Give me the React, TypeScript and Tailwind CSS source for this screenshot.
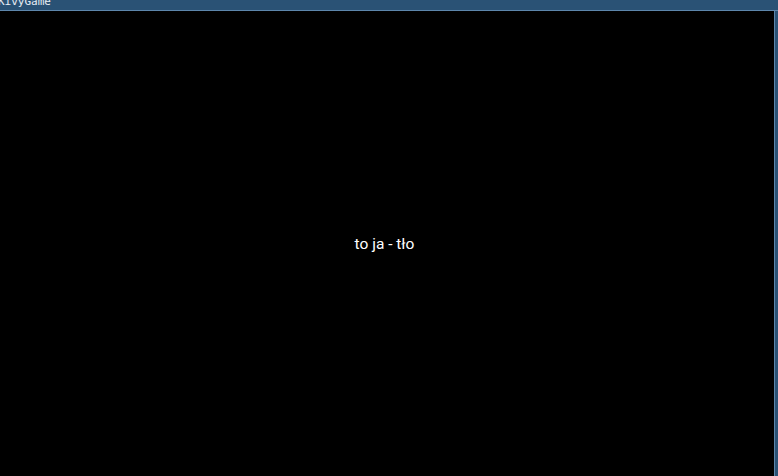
import React from "react";

export default function App() {
  return (
    <div className="w-[778px] h-[476px] bg-black flex flex-col overflow-hidden">
      <div className="h-[10px] bg-[#2a5275] relative overflow-hidden shrink-0">
        <span className="absolute left-[-2px] top-[-5px] text-[11px] leading-[14px] text-[#e8eef4] font-['DejaVu_Sans_Mono',monospace]">KivyGame</span>
      </div>
      <div className="h-px bg-[#5d86ab] shrink-0" />
      <div className="flex-1 flex">
        <div className="flex-1 flex items-center justify-center">
          <span className="text-white text-[15.5px] font-['Roboto',sans-serif] ml-[-5px] mt-[3px]">to ja - tło</span>
        </div>
        <div className="w-px bg-[#5d86ab]" />
        <div className="w-[3px] bg-[#2a5275]" />
      </div>
    </div>
  );
}
